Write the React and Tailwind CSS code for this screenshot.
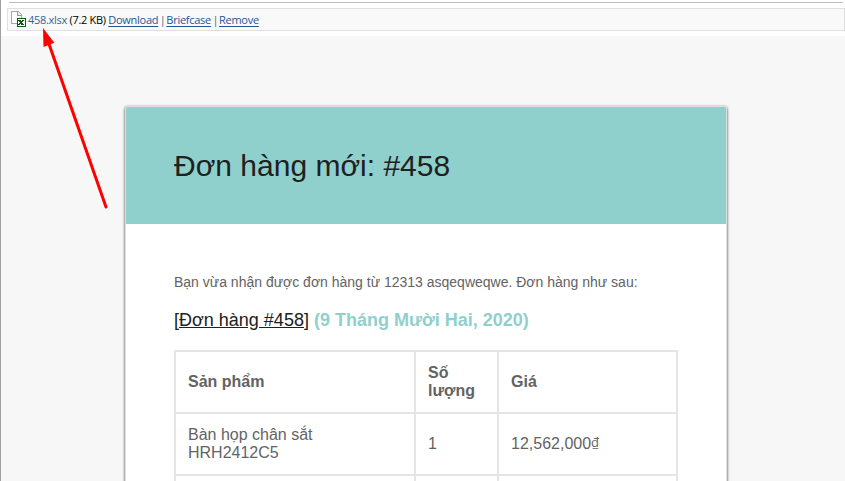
function FileIcon() {
  return (
    <svg width="16" height="17" viewBox="0 0 16 17" className="block shrink-0" shapeRendering="crispEdges">
      <path d="M0.5 0.5h7l3 3v9h-10z" fill="#fff" stroke="#a9a9a9" />
      <path d="M6.5 0.5v4h4" fill="#eee" stroke="#999" />
      <rect x="6" y="7" width="9" height="9" fill="#0b5a10" />
      <rect x="7" y="8" width="7" height="7" fill="#fff" />
      <path d="M7 9h3v1h1v-1h2v1h-1v1h-1v1h1v1h1v1h-3v-1h-1v1h-2v-1h1v-1h1v-1h-1v-1h-1z" fill="#0b5a10" />
    </svg>
  );
}

const link = "text-[#1e5494] underline underline-offset-[2px]";
const divider = "tracking-[-1.2px] text-[#47688a]";
const cell = "border-2 border-[#e5e5e5] px-3 py-0 text-left align-middle";

function Attachment() {
  return (
    <div className="ml-[6px] mt-[5px] flex h-[23px] shrink-0 items-center border border-[#dfdfdf] bg-[#f9f9f9] pl-[3px] font-['Open_Sans','Noto_Sans',sans-serif] text-[11px] leading-[20px] tracking-[-0.28px] whitespace-pre text-black">
      <FileIcon />
      <span className="ml-px">
        <span className="tracking-[-0.3px]">
          <a className="text-[#2f659c]">458.xlsx</a> (7.2 KB){" "}
        </span>
        <a className={link}>Download</a>
        <span className={divider}> | </span>
        <a className={link}>Briefcase</a>
        <span className={divider}> | </span>
        <a className={link}>Remove</a>
      </span>
    </div>
  );
}

export default function App() {
  return (
    <div className="relative flex h-[481px] w-[845px] flex-col overflow-hidden border-l border-[#a0a0a0] bg-white font-['Liberation_Sans',Arial,sans-serif]">
      <div className="ml-2 mr-[2px] mt-[2px] h-px shrink-0 bg-[#bdbdbd]" />
      <Attachment />
      <main className="mt-[5px] flex min-h-0 flex-1 flex-col bg-[#f7f7f7] pl-[124px] pt-[70px]">
        <section className="h-[500px] w-[602px] shrink-0 rounded-[3px] border border-[#dedede] bg-white shadow-[0_1px_3px_rgba(0,0,0,0.8)]">
          <header className="flex h-[117px] items-center rounded-t-[2px] bg-[#8fd0cd] pl-12">
            <h1 className="text-[30px] leading-[45px] text-[#202020]">Đơn hàng mới: #458</h1>
          </header>
          <div className="px-12 pt-12 text-[#636363]">
            <p className="text-[14px] leading-[21px]">Bạn vừa nhận được đơn hàng từ 12313 asqeqweqwe. Đơn hàng như sau:</p>
            <h2 className="mt-4 text-[18px] leading-[23px] font-bold text-[#8fd0cd]">
              <a className="font-normal text-[#202020] underline">[Đơn hàng #458]</a> (9 Tháng Mười Hai, 2020)
            </h2>
            <table className="mt-[18px] w-[504px] table-fixed border-collapse text-[16px] leading-[18px]">
              <colgroup>
                <col className="w-[240px]" />
                <col className="w-[83px]" />
                <col />
              </colgroup>
              <thead>
                <tr className="h-[62px]">
                  <th className={cell}>Sản phẩm</th>
                  <th className={cell}>Số lượng</th>
                  <th className={cell}>Giá</th>
                </tr>
              </thead>
              <tbody>
                <tr className="h-[62px]">
                  <td className={cell}>Bàn họp chân sắt<br />HRH2412C5</td>
                  <td className={cell}>1</td>
                  <td className={cell}>12,562,000<span className="align-[2px] font-['Open_Sans'] text-[13px] leading-none">₫</span></td>
                </tr>
                <tr className="h-[62px]">
                  <td className={cell} />
                  <td className={cell} />
                  <td className={cell} />
                </tr>
              </tbody>
            </table>
          </div>
        </section>
      </main>
      <svg className="pointer-events-none absolute left-[29px] top-[20px]" width="120" height="200" viewBox="30 20 120 200">
        <path d="M106 207L49 44" stroke="#f00" strokeWidth="3" strokeLinecap="round" />
        <path d="M43 28L54.3 42.7L43.5 47z" fill="#f00" />
      </svg>
    </div>
  );
}
